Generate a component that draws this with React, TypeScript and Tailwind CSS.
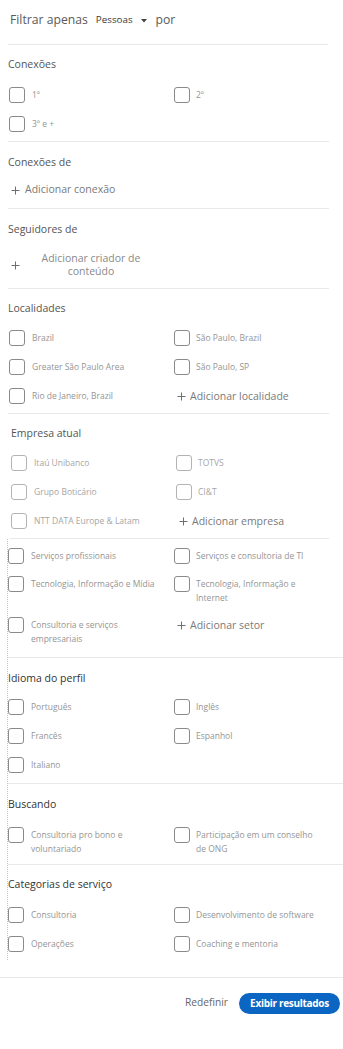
import React from 'react'

type Item = { label: string } | { add: string }

function Plus({ className }: { className?: string }) {
    return (
        <svg width="9" height="9" viewBox="0 0 9 9" className={'shrink-0 ' + (className || '')}>
            <path d="M4.5 0.5 V8.5 M0.5 4.5 H8.5" stroke="#6f6f6f" strokeWidth="1" fill="none" />
        </svg>
    )
}

function Box({ light }: { light?: boolean }) {
    return (
        <span
            className={
                'block w-4 h-4 shrink-0 rounded-[3px] border bg-white ' +
                (light ? 'border-[#b3b3b3]' : 'border-[#8a8a8a]')
            }
        />
    )
}

function Check({ label, light, right }: { label: string; light?: boolean; right?: boolean }) {
    return (
        <div className={'flex items-start ' + (right ? 'gap-[6px]' : 'gap-[7px]')}>
            <Box light={light} />
            <span
                className={
                    'pt-[1px] text-[8.5px] leading-[14px] ' +
                    (light ? 'text-[#a6a6a6] ' : 'text-[#959595] ') +
                    (right ? 'max-w-[128px]' : 'max-w-[132px]')
                }
            >
                {label}
            </span>
        </div>
    )
}

function Add({ text }: { text: string }) {
    return (
        <div className="flex items-center h-4 pl-[3px] text-[10.5px] leading-[14px] text-[#7a7a7a]">
            <Plus className="mr-[4px]" />
            {text}
        </div>
    )
}

function Grid({ items, light, gap, cols }: { items: Item[]; light?: boolean; gap: string; cols: string }) {
    return (
        <div className={'grid ' + cols + ' ' + gap}>
            {items.map((it, i) =>
                'label' in it ? (
                    <Check key={i} label={it.label} light={light} right={i % 2 === 1} />
                ) : (
                    <Add key={i} text={it.add} />
                )
            )}
        </div>
    )
}

export default function App() {
    return (
        <div className="w-[343px] min-h-[1049px] bg-white font-['Open_Sans','Noto_Sans',sans-serif]">
            {/* topo */}
            <div className="ml-[8px] w-[320px] h-[45px] pb-[4px] pl-[2px] flex items-center border-b border-[#e8e8e8]">
                <span className="text-[12.2px] text-[#5a5a5a]">Filtrar apenas</span>
                <span className="ml-[8px] text-[9.8px] text-[#3a3a3a]">Pessoas</span>
                <svg width="6" height="4" viewBox="0 0 6 4" className="ml-[8px] mt-[2px]">
                    <path d="M0 0 L6 0 L3 3.5 Z" fill="#444" />
                </svg>
                <span className="ml-[9px] text-[12.2px] text-[#5a5a5a]">por</span>
            </div>

            <div className="ml-[8px] w-[321px]">
                <div className="pt-[12px] pb-[9px] border-b border-[#e8e8e8]">
                    <p className="text-[10.5px] leading-[14px] text-[#555]">Conexões</p>
                    <div className="mt-[16px] pl-[1px]">
                        <Grid
                            cols="grid-cols-[165px_1fr]"
                            gap="gap-y-[13px]"
                            items={[{ label: '1º' }, { label: '2º' }, { label: '3º e +' }]}
                        />
                    </div>
                </div>

                <div className="pt-[13px] pb-[11px] border-b border-[#e8e8e8]">
                    <p className="text-[10.5px] leading-[14px] text-[#555]">Conexões de</p>
                    <div className="mt-[14px] h-[14px] flex items-center pl-[3px] text-[10.5px] text-[#7a7a7a]">
                        <Plus className="mr-[5px]" />
                        Adicionar conexão
                    </div>
                </div>

                <div className="pt-[13px] pb-[10.5px] border-b border-[#e8e8e8]">
                    <p className="text-[10.5px] leading-[14px] text-[#555]">Seguidores de</p>
                    <div className="mt-[15.5px] flex items-center pl-[3px] text-[10.5px] text-[#7a7a7a]">
                        <Plus className="mt-[2px]" />
                        <span className="ml-[16px] w-[110px] text-center leading-[13px] text-[#8a8a8a]">
                            Adicionar criador de conteúdo
                        </span>
                    </div>
                </div>

                <div className="pt-[12px] pb-[9px] border-b border-[#e8e8e8]">
                    <p className="text-[10.5px] leading-[14px] text-[#555]">Localidades</p>
                    <div className="mt-[15px] pl-[1px]">
                        <Grid
                            cols="grid-cols-[165px_1fr]"
                            gap="gap-y-[13px]"
                            items={[
                                { label: 'Brazil' },
                                { label: 'São Paulo, Brazil' },
                                { label: 'Greater São Paulo Area' },
                                { label: 'São Paulo, SP' },
                                { label: 'Rio de Janeiro, Brazil' },
                                { add: 'Adicionar localidade' },
                            ]}
                        />
                    </div>
                </div>
            </div>

            <div className="ml-[10px] w-[319px] pt-[12px] pb-[9px] border-b border-[#e8e8e8]">
                <p className="pl-[1px] text-[10.5px] leading-[14px] text-[#555]">Empresa atual</p>
                <div className="mt-[15px] pl-[1px]">
                    <Grid
                        light
                        cols="grid-cols-[165px_1fr]"
                        gap="gap-y-[13px]"
                        items={[
                            { label: 'Itaú Unibanco' },
                            { label: 'TOTVS' },
                            { label: 'Grupo Boticário' },
                            { label: 'CI&T' },
                            { label: 'NTT DATA Europe & Latam' },
                            { add: 'Adicionar empresa' },
                        ]}
                    />
                </div>
            </div>

            {/* bloco com borda tracejada */}
            <div className="ml-[7px] w-[336px] border-l border-dotted border-[#c4c4c4]">
                <div className="pt-[9px] pb-[10.5px] border-b border-[#e8e8e8]">
                    <Grid
                        cols="grid-cols-[166px_1fr]"
                        gap="gap-y-[12px]"
                        items={[
                            { label: 'Serviços profissionais' },
                            { label: 'Serviços e consultoria de TI' },
                            { label: 'Tecnologia, Informação e Mídia' },
                            { label: 'Tecnologia, Informação e Internet' },
                            { label: 'Consultoria e serviços empresariais' },
                            { add: 'Adicionar setor' },
                        ]}
                    />
                </div>

                <div className="pt-[13px] pb-[10px] border-b border-[#e8e8e8]">
                    <p className="text-[10.5px] leading-[14px] text-[#333]">Idioma do perfil</p>
                    <div className="mt-[14px]">
                        <Grid
                            cols="grid-cols-[166px_1fr]"
                            gap="gap-y-[13px]"
                            items={[
                                { label: 'Português' },
                                { label: 'Inglês' },
                                { label: 'Francês' },
                                { label: 'Espanhol' },
                                { label: 'Italiano' },
                            ]}
                        />
                    </div>
                </div>

                <div className="pt-[13px] pb-[8px] border-b border-[#e8e8e8]">
                    <p className="text-[10.5px] leading-[14px] text-[#333]">Buscando</p>
                    <div className="mt-[16px]">
                        <Grid
                            cols="grid-cols-[166px_1fr]"
                            gap="gap-y-[13px]"
                            items={[
                                { label: 'Consultoria pro bono e voluntariado' },
                                { label: 'Participação em um conselho de ONG' },
                            ]}
                        />
                    </div>
                </div>

                <div className="pt-[12px] pb-[8px]">
                    <p className="text-[10.5px] leading-[14px] text-[#333]">Categorias de serviço</p>
                    <div className="mt-[16px]">
                        <Grid
                            cols="grid-cols-[166px_1fr]"
                            gap="gap-y-[13px]"
                            items={[
                                { label: 'Consultoria' },
                                { label: 'Desenvolvimento de software' },
                                { label: 'Operações' },
                                { label: 'Coaching e mentoria' },
                            ]}
                        />
                    </div>
                </div>
            </div>

            <div className="h-[18px] border-b border-[#e8e8e8]" />

            <div className="pt-[15px] pr-[3px] flex items-center justify-end">
                <button className="mr-[11px] text-[10.2px] text-[#666]">Redefinir</button>
                <button className="w-[101px] h-[21px] rounded-full bg-[#0a66c2] text-white text-[10px] font-bold tracking-[-0.3px]">
                    Exibir resultados
                </button>
            </div>
        </div>
    )
}
